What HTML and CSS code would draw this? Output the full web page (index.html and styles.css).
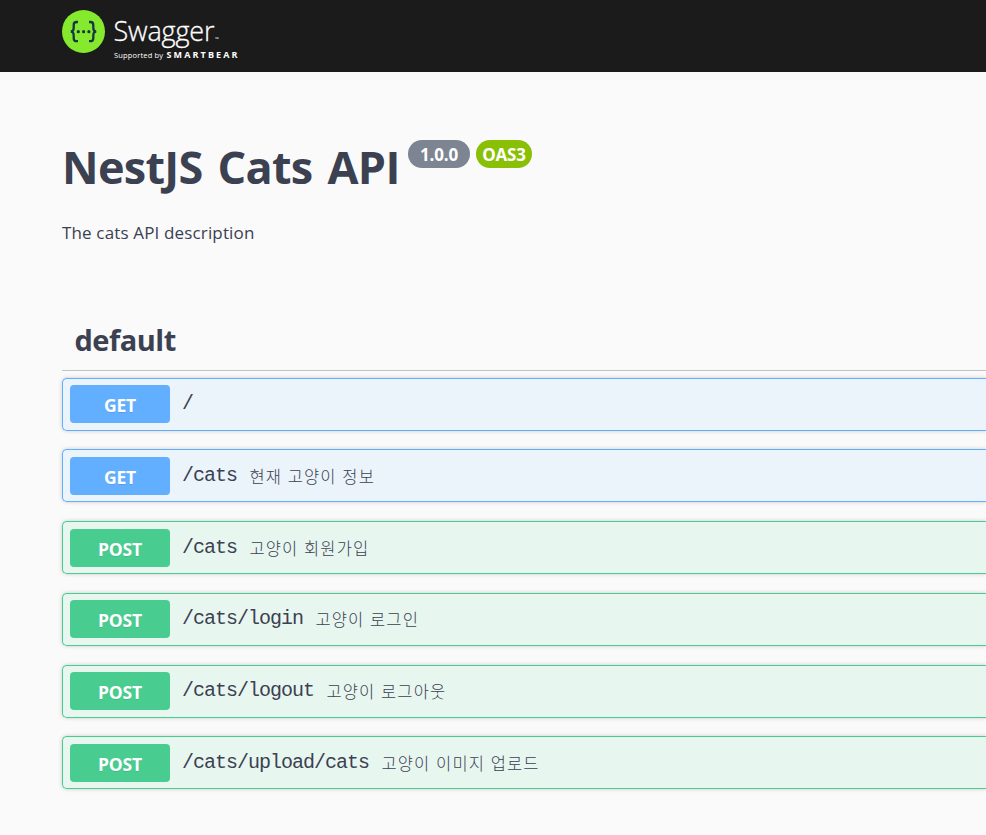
FILE: index.html
```html
<!DOCTYPE html>
<html lang="ko">
<head>
<meta charset="utf-8">
<title>Swagger UI</title>
<link rel="stylesheet" href="styles.css">
</head>
<body>
<header class="topbar">
  <svg class="logo" width="190" height="72" viewBox="0 0 190 72">
    <circle cx="21.5" cy="31.5" r="21.5" fill="#85ea2d"/>
    <g fill="none" stroke="#173647" stroke-width="2.3">
      <path d="M16 22h-1.5q-2.8 0-2.8 3v3q0 3.6-3 3.6q3 0 3 3.6v3q0 3 2.8 3h1.5"/>
      <path d="M27 22h1.5q2.8 0 2.8 3v3q0 3.6 3 3.6q-3 0-3 3.6v3q0 3-2.8 3h-1.5"/>
    </g>
    <g fill="#173647"><circle cx="16.3" cy="31.7" r="1.6"/><circle cx="21.6" cy="31.7" r="1.6"/><circle cx="26.9" cy="31.7" r="1.6"/></g>
    <text class="brand" x="51.5" y="41" textLength="101">Swagger</text>
    <text class="tm" x="153" y="41">™</text>
    <text class="supported" x="52" y="58" textLength="49">Supported by</text>
    <text class="smartbear" x="104.5" y="58" textLength="71">SMARTBEAR</text>
  </svg>
</header>
<main class="page">
  <section class="info">
    <h1 class="title"><span class="name">NestJS Cats API</span><span class="badge version">1.0.0</span><span class="badge oas">OAS3</span></h1>
    <p class="description">The cats API description</p>
  </section>
  <section>
    <h2 class="tag">default</h2>
    <div class="operations">
      <div class="op get"><span class="method">GET</span><span class="path">/</span></div>
      <div class="op get"><span class="method">GET</span><span class="path">/cats</span><span class="summary">현재 고양이 정보</span></div>
      <div class="op post"><span class="method">POST</span><span class="path">/cats</span><span class="summary">고양이 회원가입</span></div>
      <div class="op post"><span class="method">POST</span><span class="path">/cats/login</span><span class="summary">고양이 로그인</span></div>
      <div class="op post"><span class="method">POST</span><span class="path">/cats/logout</span><span class="summary">고양이 로그아웃</span></div>
      <div class="op post"><span class="method">POST</span><span class="path">/cats/upload/cats</span><span class="summary">고양이 이미지 업로드</span></div>
    </div>
  </section>
</main>
</body>
</html>
```
FILE: styles.css
```css
* { box-sizing: border-box; }
body {
  margin: 0;
  min-height: 835px;
  overflow: hidden;
  background: #fafafa;
  color: #3b4151;
  font-family: "Open Sans", "Noto Sans CJK KR", sans-serif;
}
.topbar { height: 72px; padding-left: 62px; background: #1b1b1b; }
.logo { display: block; fill: #fff; font-family: "Open Sans", sans-serif; }
.brand { font-size: 27px; font-weight: 300; stroke: #fff; stroke-width: .3px; }
.tm { font-size: 5px; }
.supported { font-size: 7.5px; }
.smartbear { font-size: 9px; font-weight: 700; }
.page { padding-left: 62px; }
.info { height: 239px; padding-top: 62px; }
.title { display: flex; align-items: flex-start; height: 70px; margin: 0; }
.name {
  width: 346px;
  font-size: 45px;
  font-weight: 700;
  line-height: 66px;
  letter-spacing: -.7px;
  word-spacing: 4px;
  white-space: nowrap;
}
.badge {
  height: 28px;
  margin-top: 6px;
  border-radius: 14px;
  color: #fff;
  font-size: 17px;
  font-weight: 700;
  line-height: 29px;
  letter-spacing: -.2px;
  text-align: center;
}
.version { width: 62px; background: #7d8492; }
.oas { width: 56px; margin-left: 6px; background: #89bf04; }
.description { margin: 16px 0 0; font-size: 17px; line-height: 25px; letter-spacing: .15px; }
.tag {
  height: 60px;
  margin: 0;
  padding-left: 12.5px;
  border-bottom: 1px solid #c0c3c8;
  font-size: 29px;
  font-weight: 700;
  line-height: 57px;
  letter-spacing: -.5px;
}
.operations { display: flex; flex-direction: column; gap: 18.75px; padding-top: 6.6px; }
.op {
  display: flex;
  align-items: center;
  height: 53px;
  padding-left: 7px;
  border: 1px solid;
  border-right: 0;
  border-radius: 5px 0 0 5px;
  box-shadow: 0 0 4px rgba(0, 0, 0, .19);
}
.get { border-color: #61affe; background: #ebf3fb; }
.post { border-color: #49cc90; background: #e8f6f0; }
.method {
  width: 100px;
  height: 38px;
  border-radius: 4px;
  color: #fff;
  font-size: 17.5px;
  font-weight: 700;
  line-height: 40px;
  letter-spacing: -.2px;
  text-align: center;
  text-shadow: 0 1px 0 rgba(0, 0, 0, .1);
}
.get .method { background: #61affe; }
.post .method { background: #49cc90; }
.path {
  margin-left: 12px;
  font-family: "Liberation Mono", monospace;
  font-size: 20px;
  letter-spacing: -1px;
  line-height: 28px;
}
.summary {
  margin-left: 12.5px;
  font-family: "Noto Sans CJK KR", sans-serif;
  font-size: 16.5px;
  font-weight: 300;
  letter-spacing: 1.1px;
  line-height: 24px;
}
```
